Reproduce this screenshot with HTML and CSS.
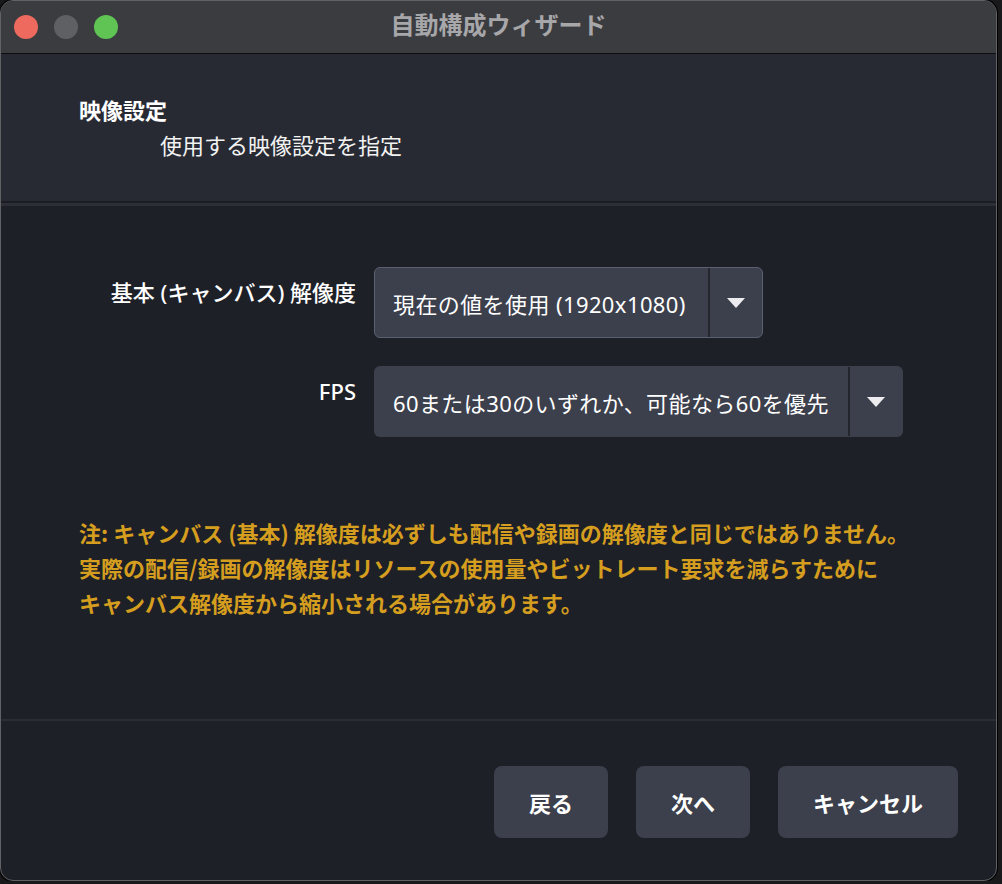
FILE: index.html
```html
<!DOCTYPE html>
<html lang="ja">
<head>
  <meta charset="UTF-8">
  <meta name="viewport" content="width=device-width, initial-scale=1.0">
  <title>自動構成ウィザード</title>
  <link rel="stylesheet" href="styles.css">
</head>
<body>
  <div class="window">
    <div class="titlebar">
      <div class="lights">
        <span class="light red"></span>
        <span class="light gray"></span>
        <span class="light green"></span>
      </div>
      <div class="title">自動構成ウィザード</div>
    </div>

    <div class="header">
      <h1>映像設定</h1>
      <p class="subtitle">使用する映像設定を指定</p>
    </div>
    <div class="sep"></div>

    <div class="content">
      <div class="form">
        <label class="form-label">基本 (キャンバス) 解像度</label>
        <div class="combo combo-res focused">
          <span class="combo-text">現在の値を使用 (1920x1080)</span>
          <span class="combo-arrow">
            <svg width="18" height="10" viewBox="0 0 18 10"><polygon points="0,0 18,0 9,10" fill="#ececee"/></svg>
          </span>
        </div>

        <label class="form-label">FPS</label>
        <div class="combo combo-fps">
          <span class="combo-text">60または30のいずれか、可能なら60を優先</span>
          <span class="combo-arrow">
            <svg width="18" height="10" viewBox="0 0 18 10"><polygon points="0,0 18,0 9,10" fill="#ececee"/></svg>
          </span>
        </div>
      </div>

      <p class="note">
        注: キャンバス (基本) 解像度は必ずしも配信や録画の解像度と同じではありません。<br>
        実際の配信/録画の解像度はリソースの使用量やビットレート要求を減らすために<br>
        キャンバス解像度から縮小される場合があります。
      </p>
    </div>

    <div class="footer">
      <button class="btn">戻る</button>
      <button class="btn">次へ</button>
      <button class="btn">キャンセル</button>
    </div>
  </div>
</body>
</html>
```

FILE: styles.css
```css
* {
  box-sizing: border-box;
}
body {
  margin: 0;
  background: #19191b;
  font-family: "Noto Sans CJK JP", "Noto Sans", sans-serif;
  color: #fff;
}
.window {
  width: 997px;
  height: 881px;
  display: flex;
  flex-direction: column;
  background: #1e2028;
  border: 1px solid #626266;
  border-radius: 13px;
  overflow: hidden;
  box-shadow: 0 0 0 1px #000;
}

/* title bar */
.titlebar {
  height: 53px;
  flex-shrink: 0;
  display: grid;
  grid-template-columns: 1fr auto 1fr;
  align-items: center;
  background: #3b3c40;
  border-bottom: 1px solid #0e0e10;
  padding: 0 13px;
}
.lights {
  display: flex;
  gap: 16px;
}
.light {
  width: 24px;
  height: 24px;
  border-radius: 50%;
}
.red { background: #ee6a5e; }
.gray { background: #5f6064; }
.green { background: #5fc454; }
.title {
  font-size: 24px;
  font-weight: 700;
  color: #a7a7aa;
  padding-bottom: 7px;
}

/* header */
.header {
  height: 147px;
  flex-shrink: 0;
  background: #282a33;
  padding: 38px 0 0 78px;
}
.header h1 {
  margin: 0;
  font-size: 22px;
  line-height: 35px;
  font-weight: 700;
}
.subtitle {
  margin: 0 0 0 81px;
  font-size: 22px;
  line-height: 35px;
  color: #f2f2f2;
}
.sep {
  height: 5px;
  flex-shrink: 0;
  border-top: 2px solid #1b1d23;
  background: #2c2f38;
}

/* form */
.content {
  flex: 1;
  padding-top: 61px;
}
.form {
  display: grid;
  grid-template-columns: 276px max-content;
  column-gap: 18px;
  row-gap: 28px;
  padding-left: 79px;
}
.form-label {
  text-align: right;
  padding-top: 8px;
  font-family: "Noto Sans", "Noto Sans CJK JP", sans-serif;
  font-size: 22px;
  line-height: 35px;
  font-weight: 500;
  white-space: nowrap;
}
.combo {
  height: 71px;
  display: flex;
  align-items: stretch;
  background: #3c404c;
  border: 1px solid transparent;
  border-radius: 6px;
}
.combo.focused {
  border-color: #5b6071;
}
.combo-res { width: 389px; }
.combo-fps { width: 529px; }
.combo-text {
  flex: 1;
  display: flex;
  align-items: center;
  padding-left: 18px;
  font-family: "Noto Sans", "Noto Sans CJK JP", sans-serif;
  font-size: 22px;
  letter-spacing: 0.4px;
  white-space: nowrap;
}
.combo-arrow {
  width: 54px;
  display: flex;
  align-items: center;
  justify-content: center;
  border-left: 2px solid #23262d;
}

.note {
  margin: 78px 0 0;
  padding-left: 78px;
  font-size: 22px;
  line-height: 35px;
  font-weight: 700;
  color: #d59e1f;
  white-space: nowrap;
}

/* buttons */
.footer {
  height: 161px;
  flex-shrink: 0;
  border-top: 2px solid #2a2d36;
  display: flex;
  justify-content: flex-end;
  align-items: flex-start;
  gap: 28px;
  padding: 45px 38px 0 0;
}
.btn {
  height: 72px;
  padding: 0 35px;
  border: none;
  border-radius: 8px;
  background: #3c3f4c;
  color: #fff;
  font-family: inherit;
  font-size: 22px;
  font-weight: 700;
}
```
